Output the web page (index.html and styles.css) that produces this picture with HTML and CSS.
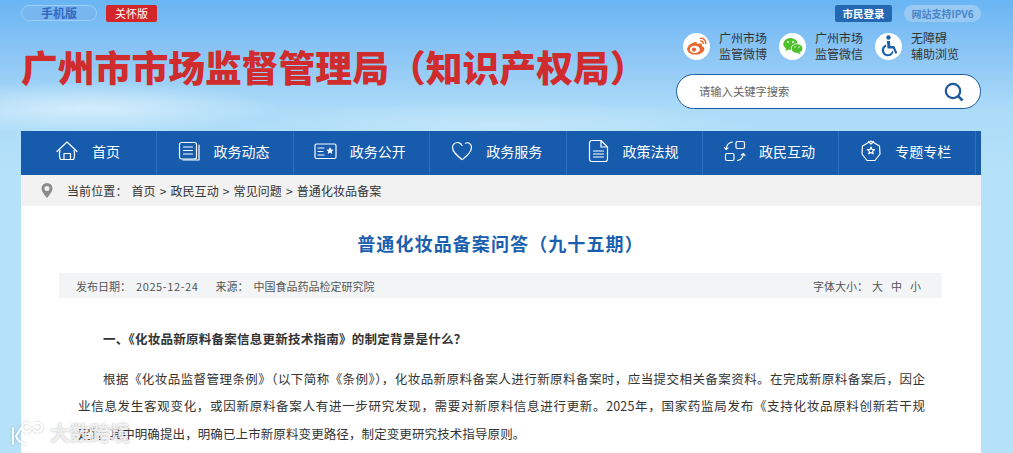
FILE: index.html
```html
<!DOCTYPE html>
<html lang="zh">
<head>
    <meta charset="utf-8">
    <title>普通化妆品备案问答（九十五期）</title>
    <link rel="stylesheet" href="styles.css">
</head>
<body>
    <div class="wrap">
        <!-- 头部 -->
        <div class="header">
            <div class="head-left">
                <div class="ver-links">
                    <a class="ver-mobile">手机版</a>
                    <a class="ver-care">关怀版</a>
                </div>
                <h1 class="site-name">广州市市场监督管理局（知识产权局）</h1>
            </div>
            <div class="head-right">
                <div class="top-links">
                    <a class="btn-login">市民登录</a>
                    <a class="btn-ipv6">网站支持IPV6</a>
                </div>
                <div class="media">
                    <div class="media-item">
                        <span class="media-icon">
                            <svg width="22" height="20" viewBox="0 0 22 20">
                                <path d="M9 6.2C5 6.8 1.2 10 1.2 13.2c0 3 3.6 5.4 8.2 5.4 5 0 9-2.7 9-5.6 0-1.8-1.6-2.5-2.6-2.8.5-1.400.2-2.400-1-2.700-1.200-.3-3 .3-3.800.7.2-1.400-.5-2.400-2-2z" fill="#e8672c"/>
                                <ellipse cx="8.800" cy="13.400" rx="5" ry="3.700" fill="#fff"/>
                                <circle cx="8" cy="13.600" r="2.100" fill="#e8672c"/>
                                <path d="M14.500 2.200c3-.4 5.500 2 5.200 5.200M14.800 5c1.500-.2 2.500 1 2.300 2.500" fill="none" stroke="#e8672c" stroke-width="1.500" stroke-linecap="round"/>
                            </svg>
                        </span>
                        <span class="media-text">广州市场<br>监管微博</span>
                    </div>
                    <div class="media-item">
                        <span class="media-icon">
                            <svg width="20" height="18" viewBox="0 0 20 18">
                                <ellipse cx="7.500" cy="7" rx="7.200" ry="6" fill="#4fc02d"/>
                                <path d="M3 11l-.5 3.200L6 12z" fill="#4fc02d"/>
                                <circle cx="5" cy="5" r=".9" fill="#fff"/>
                                <circle cx="10" cy="5" r=".9" fill="#fff"/>
                                <ellipse cx="14" cy="11.500" rx="5.800" ry="4.800" fill="#4fc02d" stroke="#fff" stroke-width=".8"/>
                                <path d="M16.500 15l1 2.500-3-1.500z" fill="#4fc02d"/>
                                <circle cx="12" cy="10" r=".7" fill="#fff"/>
                                <circle cx="16" cy="10" r=".7" fill="#fff"/>
                            </svg>
                        </span>
                        <span class="media-text">广州市场<br>监管微信</span>
                    </div>
                    <div class="media-item">
                        <span class="media-icon">
                            <svg width="20" height="22" viewBox="0 0 20 22">
                                <circle cx="9.500" cy="2.500" r="2.200" fill="#1d5fa8"/>
                                <path d="M8 6h3l.3 5h4l3 7-2 .8-2.300-5.300H8.500z" fill="#1d5fa8"/>
                                <path d="M7 9.500a6 6 0 1 0 7.500 7.600l-1.500-1.600a4 4 0 1 1-5.700-3.900z" fill="#1d5fa8"/>
                            </svg>
                        </span>
                        <span class="media-text">无障碍<br>辅助浏览</span>
                    </div>
                </div>
                <div class="search">
                    <span class="search-tip">请输入关键字搜索</span>
                    <svg width="20" height="20" viewBox="0 0 20 20">
                        <circle cx="9" cy="9" r="7.200" fill="none" stroke="#1d5a9e" stroke-width="2.200"/>
                        <path d="M14.200 14.200L18.500 18.500" stroke="#1d5a9e" stroke-width="2.600"/>
                    </svg>
                </div>
            </div>
        </div>

        <!-- 导航 -->
        <ul class="nav">
            <li class="nav-home"><span class="ico-box"><svg width="24" height="24" viewBox="0 0 24 24" class="ico"><path d="M2 12.500L12 3l10 9.500M5 11.500c-1 4 -.5 7 .5 9h13c1-2 1.500-5 .5-9M9 20.500v-6h6.500v6" /></svg></span>首页</li>
            <li><span class="ico-box"><svg width="22" height="20" viewBox="0 0 22 20" class="ico"><rect x="1.500" y="1.500" width="17" height="16.500" rx="2"/><path d="M5.500 6h9M5.500 9.500h9M5.500 13h9M21 4v15H5"/></svg></span>政务动态</li>
            <li><span class="ico-box"><svg width="23" height="18" viewBox="0 0 23 18" class="ico"><rect x="1" y="2" width="21" height="14.500" rx="1.500"/><path d="M4 6h6M4 9.500h5M4 13h6"/><path d="M16 5l1.100 2.400 2.500.3-1.900 1.700.6 2.500-2.300-1.300-2.300 1.300.6-2.500-1.900-1.700 2.500-.3z" fill="#fff" stroke="none"/></svg></span>政务公开</li>
            <li><span class="ico-box"><svg width="22" height="20" viewBox="0 0 22 20" class="ico"><path d="M11 18.500C6 14.500 1.500 11 1.500 6.500 1.500 3.500 4 1.500 6.500 1.500c2 0 3.500 1 4.500 3M14.500 2.200c3-1.400 6 1 6 4.300 0 4.500-4 8-8.500 11.500"/></svg></span>政务服务</li>
            <li><span class="ico-box"><svg width="21" height="24" viewBox="0 0 21 24" class="ico"><path d="M13 1.500H4a2.500 2.500 0 0 0-2.500 2.500v16A2.500 2.500 0 0 0 4 22.500h13a2.500 2.500 0 0 0 2.500-2.500V8zM13 1.500V8h6.500M5.500 12h10M5.500 15h10M5.500 18h10"/></svg></span>政策法规</li>
            <li><span class="ico-box"><svg width="22" height="22" viewBox="0 0 22 22" class="ico"><rect x="12" y="1.500" width="8.500" height="7" rx="1.500"/><rect x="1.500" y="13.500" width="8.500" height="7" rx="1.500"/><path d="M8.500 2C5 2.500 2.500 4.500 2 9.500M.5 7.500L2 9.500l2-1.500M13.500 20.500c3-.5 5.500-2.500 6-7M17.500 15l2-1.500 1.500 2"/></svg></span>政民互动</li>
            <li><span class="ico-box"><svg width="20" height="22" viewBox="0 0 20 22" class="ico"><path d="M10 1L18.500 6l.5 8-5 6.500H6L1 14l.5-8zM7.500 1.500L10 4l2.500-2.500"/><path d="M10 7l1 2.400 2.600.2-2 1.700.6 2.500-2.200-1.300-2.200 1.300.6-2.500-2-1.700 2.600-.2z"/></svg></span>专题专栏</li>
        </ul>

        <!-- 当前位置 -->
        <div class="crumb">
            <svg width="12" height="15" viewBox="0 0 12 15"><path d="M6 0a5.500 5.500 0 0 0-5.500 5.500C.5 9 6 15 6 15s5.500-6 5.500-9.500A5.500 5.500 0 0 0 6 0zm0 8a2.500 2.500 0 1 1 0-5 2.500 2.500 0 0 1 0 5z" fill="#8c8c8c"/></svg>
            <span class="crumb-text">当前位置： 首页 &gt; 政民互动 &gt; 常见问题 &gt; 普通化妆品备案</span>
        </div>

        <!-- 正文 -->
        <div class="article">
            <h2 class="art-title">普通化妆品备案问答（九十五期）</h2>
            <div class="art-meta">
                <div class="meta-left">
                    <span>发布日期：<span class="meta-date">2025-12-24</span></span>
                    <span>来源：<span class="meta-src">中国食品药品检定研究院</span></span>
                </div>
                <div class="meta-right"><span class="meta-label">字体大小：</span><span>大</span><span>中</span><span>小</span></div>
            </div>
            <div class="art-body">
                <p class="q">一、《化妆品新原料备案信息更新技术指南》的制定背景是什么？</p>
                <p class="para">
                    <span class="line first">根据《化妆品监督管理条例》（以下简称《条例》），化妆品新原料备案人进行新原料备案时，应当提交相关备案资料。在完成新原料备案后，因企</span>
                    <span class="line">业信息发生客观变化，或因新原料备案人有进一步研究发现，需要对新原料信息进行更新。2025年，国家药监局发布《支持化妆品原料创新若干规</span>
                    <span class="line end">定》，其中明确提出，明确已上市新原料变更路径，制定变更研究技术指导原则。</span>
                </p>
            </div>
        </div>
    </div>

    <!-- 水印 -->
    <div class="mark">
        <svg width="38" height="26" viewBox="0 0 38 26"><path d="M5 8v16M13 8L8 16c1.500 4 4 7 9 8M20 3a4.500 4.500 0 1 0 3 5M25 8a4.500 4.500 0 1 0 3-5" fill="none" stroke="#fff" stroke-width="2.200" stroke-linecap="round"/></svg>
        <span>大数跨境</span>
    </div>
</body>
</html>
```
FILE: styles.css
```css
html, body { height: 100%; }
body { margin: 0; height: 453px; overflow: hidden; font-family: "Noto Sans CJK SC", sans-serif; color: #333;
    background:
        radial-gradient(ellipse 190px 26px at 90px 108px, rgba(225, 243, 253, .75), rgba(225, 243, 253, 0)),
        radial-gradient(ellipse 260px 24px at 500px 125px, rgba(215, 240, 252, .5), rgba(215, 240, 252, 0)),
        linear-gradient(180deg, #69b5f3 0, #8cc6f5 55px, #acdbf8 110px, #b6e2f9 180px); }

.wrap { width: 960px; margin-left: 21px; }

.header { height: 131px; display: flex; justify-content: space-between; }
.head-left { padding-top: 5px; }
.ver-links { display: flex; gap: 9px; }
.ver-mobile { width: 76px; height: 16px; line-height: 14px; box-sizing: border-box; border: 1px solid #9bcdf5; border-radius: 8px; text-align: center; background: #78b6f0; font-size: 12px; font-weight: bold; color: #3268c0; }
.ver-care { width: 51px; height: 17px; line-height: 17px; border-radius: 2px; text-align: center; background: #d3262a; font-size: 11px; color: #fff; }
.site-name { margin: 19px 0 0 0; font-size: 36.800px; line-height: 50px; font-weight: 900; color: #d02b2d; white-space: nowrap; }

.head-right { width: 305px; display: flex; flex-direction: column; }
.top-links { display: flex; justify-content: flex-end; gap: 12px; padding-top: 5px; }
.btn-login { width: 57px; height: 17px; line-height: 17px; border-radius: 2px; text-align: center; background: #2468b4; color: #fff; font-size: 10.500px; font-weight: bold; }
.btn-ipv6 { width: 77px; height: 17px; line-height: 17px; border-radius: 9px; text-align: center; background: #97c9f3; color: #4a86c8; font-size: 10px; font-weight: bold; }

.media { display: flex; margin-top: 8px; padding-left: 7px; }
.media-item { width: 96px; display: flex; align-items: center; gap: 9px; }
.media-icon { width: 27px; height: 27px; border-radius: 50%; background: #fff; display: flex; align-items: center; justify-content: center; flex: none; }
.media-text { font-size: 12px; line-height: 16px; color: #333; white-space: nowrap; }

.search { margin-top: 12px; width: 305px; height: 35px; box-sizing: border-box; border: 1px solid #1d5a9e; border-radius: 18px; background: #fff; display: flex; align-items: center; justify-content: space-between; padding: 0 16px 0 22px; }
.search-tip { font-size: 11.300px; color: #666; padding-bottom: 2px; }

.nav { margin: 0; padding: 0; list-style: none; height: 44px; background: #175bad; display: flex; }
.nav li { width: 136.400px; box-sizing: border-box; border-right: 1px solid #2e6fbd; display: flex; align-items: center; padding: 0 0 5px 20px; gap: 12px; font-size: 14px; color: #fff; white-space: nowrap; }
.nav .nav-home { padding-left: 34px; gap: 13px; }
.ico-box { width: 24px; display: flex; justify-content: center; flex: none; }
.ico { fill: none; stroke: #fff; stroke-width: 1.200; stroke-linejoin: round; stroke-linecap: round; flex: none; }

.crumb { height: 31px; background: #f2f2f2; display: flex; align-items: center; padding-left: 20px; padding-bottom: 1px; box-sizing: border-box; gap: 14px; font-size: 12px; color: #333; }
.crumb-text { letter-spacing: .1px; word-spacing: 1.200px; }

.article { background: #fff; height: 247px; padding: 1px 39px 0 38px; }
.art-title { margin: 24px 0 0 0; text-align: center; font-size: 18px; line-height: 24px; font-weight: bold; color: #1a5fae; letter-spacing: 1.100px; }
.art-meta { margin-top: 18px; height: 25px; background: #f2f4f5; display: flex; justify-content: space-between; align-items: center; padding: 0 21px 0 17px; font-size: 11px; color: #555; }
.meta-left { display: flex; gap: 17px; }
.meta-date { margin-left: 5px; letter-spacing: .6px; }
.meta-src { margin-left: 5px; }
.meta-right { display: flex; gap: 8px; }
.meta-label { margin-right: -4px; }

.art-body { padding: 0 17px 0 19px; font-size: 12.500px; color: #333; }
.art-body p { margin: 0; line-height: 27.500px; }
.art-body .q { margin-top: 27px; margin-bottom: 12px; padding-left: 25px; font-weight: bold; letter-spacing: .25px; }
.para { letter-spacing: .1px; }
.line { display: block; text-align: justify; text-align-last: justify; white-space: nowrap; }
.line.first { padding-left: 25px; }
.line.end { text-align-last: left; }

.mark { position: absolute; left: 8px; top: 419px; display: flex; align-items: center; gap: 4px; font-size: 20px; line-height: 28px; font-weight: bold; color: rgba(255, 255, 255, .8); text-shadow: 0 0 2px rgba(0, 0, 0, .35); }
.mark svg { filter: drop-shadow(0 0 1px rgba(0, 0, 0, .3)); opacity: .85; }
```
